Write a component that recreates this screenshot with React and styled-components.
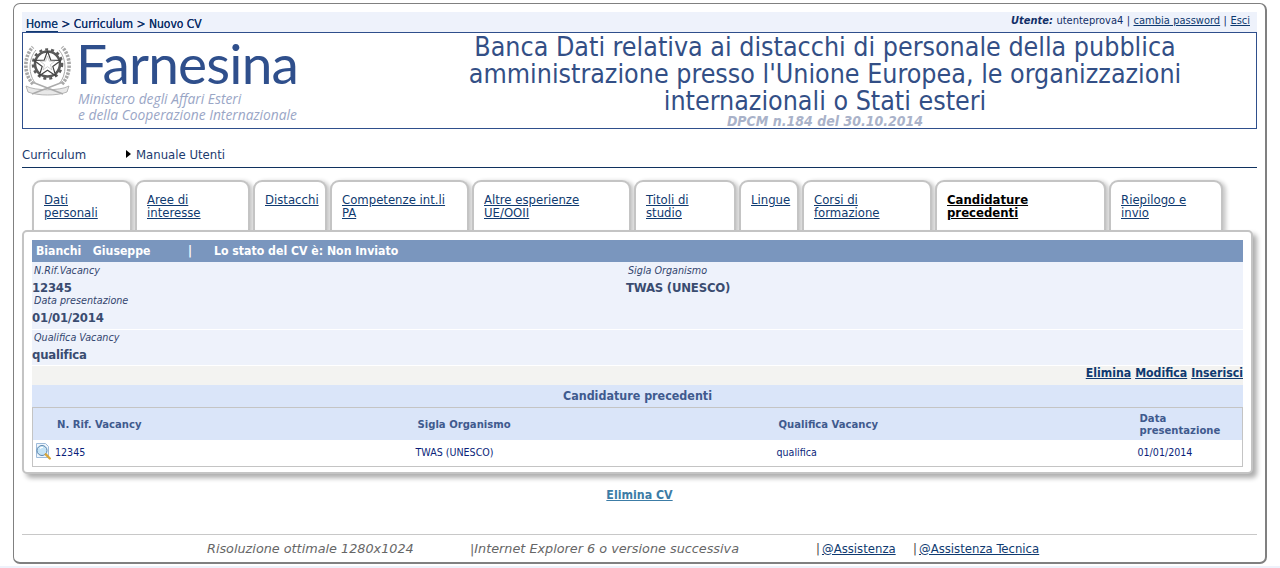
import React from "react";
import styled, { createGlobalStyle } from "styled-components";

const Global = createGlobalStyle`
  html, body { margin: 0; padding: 0; background: #fff; }
  body { font-family: "DejaVu Sans Condensed", "DejaVu Sans", sans-serif; font-stretch: condensed; color: #1c3a6e; }
  a { color: #0f3a70; text-decoration: underline; }
`;

const Frame = styled.div`
  box-sizing: border-box;
  width: 1254px;
  height: 561px;
  margin: 3px 0 0 13px;
  padding: 8px 8px 0 8px;
  background: #fff;
  border: 1px solid #808080;
  border-width: 1px 2px 2px 1px;
  border-radius: 7px;
  overflow: hidden;
`;

const BottomStrip = styled.div`
  height: 2px;
  margin-top: 2px;
  background: #eef2fb;
`;

const TopBar = styled.div`
  display: flex;
  justify-content: space-between;
  align-items: center;
  height: 20px;
  padding: 0 7px 0 4px;
  background: #eef2fb;
`;

const Crumbs = styled.div`
  font-size: 12px;
  padding-top: 3px;
  color: #0f2f66;
  text-shadow: 0 0 0.4px #0f2f66;
  a { color: #123a70; text-decoration: none; border-bottom: 1px solid #123a70; }
`;

const UserInfo = styled.div`
  font-size: 11px;
  padding-bottom: 3px;
  color: #122f68;
  word-spacing: 0.3px;
  em { font-style: italic; font-weight: 700; }
`;

const Header = styled.div`
  box-sizing: border-box;
  height: 97px;
  display: flex;
  border: 1px solid #2f4f8c;
`;

const Logo = styled.div`
  flex: none;
  width: 442px;
  display: flex;
  padding: 10px 0 0 1px;
  box-sizing: border-box;
`;

const LogoText = styled.div`
  margin: -6px 0 0 5px;
  font-family: "Lato", sans-serif;
  font-stretch: normal;
`;

const Brand = styled.div`
  font-size: 55px;
  line-height: 52px;
  letter-spacing: -0.8px;
  color: #2f4f8c;
`;

const Ministry = styled.div`
  font-family: "Open Sans", sans-serif;
  font-size: 13.8px;
  line-height: 16px;
  font-style: italic;
  color: #9aa6c6;
  margin: 2px 0 0 2px;
`;

const TitleBox = styled.div`
  flex: 1;
  text-align: center;
  padding: 0 71px 0 0;
`;

const Title = styled.div`
  font-size: 26.6px;
  line-height: 27px;
  color: #334f86;
`;

const Subtitle = styled.div`
  font-size: 14px;
  line-height: 14px;
  font-weight: 700;
  font-style: italic;
  color: #a9b2c9;
`;

const SubNav = styled.div`
  display: flex;
  align-items: center;
  height: 18px;
  margin-top: 16px;
  padding-bottom: 4px;
  font-size: 13px;
  border-bottom: 1px solid #10325f;
`;

const SubItem = styled.span`
  width: 104px;
`;

const Arrow = styled.span`
  width: 0;
  height: 0;
  margin-right: 5px;
  border-left: 5px solid #000;
  border-top: 4px solid transparent;
  border-bottom: 4px solid transparent;
`;

const Tabs = styled.div`
  display: flex;
  gap: 3px;
  margin: 12px 0 -2px 10px;
  position: relative;
`;

const Tab = styled.div`
  box-sizing: border-box;
  width: ${p => p.$w}px;
  height: 52px;
  padding: 11px 8px 0 10px;
  font-size: 13px;
  line-height: 13px;
  background: #fff;
  border: 2px solid #c4c4c4;
  border-bottom: 0;
  border-radius: 9px 9px 0 0;
  box-shadow: 3px 1px 4px rgba(0, 0, 0, 0.22);
  a { font-weight: ${p => (p.$active ? 700 : 400)}; color: ${p => (p.$active ? "#000" : "#0f3a70")}; }
`;

const Panel = styled.div`
  position: relative;
  box-sizing: border-box;
  width: 1231px;
  height: 244px;
  padding: 8px 8px 0 8px;
  background: #fff;
  border: 2px solid #c4c4c4;
  border-radius: 5px;
  box-shadow: 4px 4px 5px rgba(0, 0, 0, 0.32);
`;

const StatusBar = styled.div`
  display: flex;
  height: 22px;
  align-items: center;
  padding-left: 4px;
  background: #7a96be;
  color: #fff;
  font-size: 12.2px;
  font-weight: 700;
`;

const StatusName = styled.span`
  width: 152px;
  white-space: pre;
`;

const StatusSep = styled.span`
  width: 26px;
`;

const InfoBlock = styled.div`
  box-sizing: border-box;
  display: grid;
  grid-template-columns: ${p => p.$cols || "1fr"};
  background: #eef2fb;
  height: ${p => p.$h}px;
  padding-top: ${p => p.$top || 0}px;
  margin-bottom: 1px;
`;

const Field = styled.div``;

const FieldLabel = styled.div`
  font-size: 10.7px;
  line-height: 14px;
  font-style: italic;
  color: #33456e;
  padding-left: 2px;
`;

const FieldValue = styled.div`
  font-size: 13px;
  line-height: 19px;
  margin-bottom: -3px;
  letter-spacing: -0.2px;
  font-weight: 700;
  color: #3a4c70;
`;

const Actions = styled.div`
  display: flex;
  justify-content: flex-end;
  gap: 4px;
  height: 19px;
  background: #f3f3f1;
  font-size: 12.2px;
  font-weight: 700;
  line-height: 15px;
`;

const SectionTitle = styled.div`
  height: 22px;
  line-height: 22px;
  text-align: center;
  font-size: 12.4px;
  font-weight: 700;
  color: #3f5a8e;
  background: #dae5f9;
`;

const Table = styled.table`
  box-sizing: border-box;
  width: 100%;
  height: 59px;
  table-layout: fixed;
  border-collapse: collapse;
  border: 1px solid #c4c4c4;
`;

const Head = styled.th`
  height: 31px;
  padding: 1px 0 0 ${p => p.$pad || 4}px;
  text-align: left;
  background: #dae5f9;
  color: #3f5a8e;
  font-size: 11.2px;
  line-height: 12px;
  font-weight: 700;
`;

const Cell = styled.td`
  height: 23px;
  padding: 0 0 3px 2px;
  font-size: 10.6px;
  color: #0b1f7a;
`;

const IconCell = styled.span`
  display: flex;
  align-items: center;
  gap: 4px;
`;

const Center = styled.div`
  text-align: center;
  margin-top: 14px;
  height: 46px;
  font-size: 12.3px;
  font-weight: 700;
  a { color: #3c7ca6; }
`;

const Footer = styled.div`
  display: flex;
  height: 27px;
  align-items: center;
  border-top: 1px solid #c8c8c8;
  font-size: 13px;
`;

const FootNote = styled.span`
  width: ${p => p.$w}px;
  margin-left: ${p => p.$ml || 0}px;
  font-family: "DejaVu Sans", sans-serif;
  font-stretch: normal;
  font-style: italic;
  font-size: 12.8px;
  color: #666;
  white-space: nowrap;
`;

const FootLink = styled.span`
  width: ${p => p.$w}px;
  white-space: nowrap;
  color: #444;
  a { margin-left: 2px; }
`;

const Emblem = () => (
  <svg width="47" height="55" viewBox="0 0 47 55" style={{ flex: "none" }}>
    <g fill="none" stroke="#a8a8a8">
      <path d="M9 41C0 32-1 14 9 4" strokeWidth="3.6" strokeDasharray="2.4 1.2" />
      <path d="M38 41C47 32 48 14 38 4" strokeWidth="3.6" strokeDasharray="2.4 1.2" />
      <path d="M12 41C4 32 4 16 12 7" strokeWidth="1" />
      <path d="M35 41C43 32 43 16 35 7" strokeWidth="1" />
    </g>
    <circle cx="23.5" cy="21" r="12.5" fill="#fff" stroke="#5a5a5a" strokeWidth="2.6" />
    <circle cx="23.5" cy="21" r="14.6" fill="none" stroke="#5a5a5a" strokeWidth="2.4" strokeDasharray="3 3" />
    <path
      d="M23.5 8l3.3 9.2 10 .2-8 6 2.9 9.4-8.2-5.6-8.2 5.6 2.9-9.4-8-6 10-.2z"
      fill="#fff"
      stroke="#444"
      strokeWidth="1.2"
      strokeLinejoin="round"
    />
    <path d="M23.5 13l1.8 5.2 5.5.1-4.4 3.3 1.6 5.3-4.5-3.2-4.5 3.2 1.6-5.3-4.4-3.3 5.5-.1z" fill="#fff" stroke="#b0b0b0" strokeWidth=".6" />
    <path d="M2 43c9 5 34 5 43 0l-2 6c-10 4-29 4-39 0z" fill="#e8e8e8" stroke="#a5a5a5" strokeWidth=".8" />
    <path d="M8 39l31 12M39 39L8 51" stroke="#ababab" strokeWidth="1.4" />
  </svg>
);

const PageIcon = () => (
  <svg width="16" height="17" viewBox="0 0 16 17">
    <path d="M1.5 .5h9l3 3v11h-12z" fill="#eef5fc" stroke="#9dbbda" />
    <circle cx="7" cy="7.5" r="5" fill="#c4e3f6" stroke="#5c86ad" />
    <path d="M5 5.5a3 3 0 0 1 3-1" fill="none" stroke="#fff" strokeWidth="1.2" />
    <path d="M10.8 11.3l4 4.2" stroke="#d9a63a" strokeWidth="2.4" strokeLinecap="round" />
  </svg>
);

const tabs = [
  { w: 100, lines: ["Dati", "personali"] },
  { w: 115, lines: ["Aree di", "interesse"] },
  { w: 74, lines: ["Distacchi"] },
  { w: 139, lines: ["Competenze int.li", "PA"] },
  { w: 159, lines: ["Altre esperienze", "UE/OOII"] },
  { w: 102, lines: ["Titoli di", "studio"] },
  { w: 60, lines: ["Lingue"] },
  { w: 130, lines: ["Corsi di", "formazione"] },
  { w: 171, lines: ["Candidature", "precedenti"], active: true },
  { w: 114, lines: ["Riepilogo e", "invio"] },
];

export default function App() {
  return (
    <>
      <Global />
      <Frame>
        <TopBar>
          <Crumbs>
            <a href="#home">Home</a> &gt; Curriculum &gt; Nuovo CV
          </Crumbs>
          <UserInfo>
            <em>Utente:</em> utenteprova4 | <a href="#pw">cambia password</a> | <a href="#esci">Esci</a>
          </UserInfo>
        </TopBar>
        <Header>
          <Logo>
            <Emblem />
            <LogoText>
              <Brand>Farnesina</Brand>
              <Ministry>
                Ministero degli Affari Esteri
                <br />e della Cooperazione Internazionale
              </Ministry>
            </LogoText>
          </Logo>
          <TitleBox>
            <Title>
              Banca Dati relativa ai distacchi di personale della pubblica amministrazione presso l'Unione Europea, le
              organizzazioni internazionali o Stati esteri
            </Title>
            <Subtitle>DPCM n.184 del 30.10.2014</Subtitle>
          </TitleBox>
        </Header>
        <SubNav>
          <SubItem>Curriculum</SubItem>
          <Arrow />
          <span>Manuale Utenti</span>
        </SubNav>
        <Tabs>
          {tabs.map(t => (
            <Tab key={t.lines[0]} $w={t.w} $active={t.active}>
              <a href="#tab">
                {t.lines[0]}
                {t.lines[1] && <br />}
                {t.lines[1]}
              </a>
            </Tab>
          ))}
        </Tabs>
        <Panel>
          <StatusBar>
            <StatusName>Bianchi   Giuseppe</StatusName>
            <StatusSep>|</StatusSep>
            <span>Lo stato del CV è: Non Inviato</span>
          </StatusBar>
          <InfoBlock $cols="594px 1fr" $h={67} $top={2}>
            <Field>
              <FieldLabel>N.Rif.Vacancy</FieldLabel>
              <FieldValue>12345</FieldValue>
              <FieldLabel>Data presentazione</FieldLabel>
              <FieldValue>01/01/2014</FieldValue>
            </Field>
            <Field>
              <FieldLabel>Sigla Organismo</FieldLabel>
              <FieldValue>TWAS (UNESCO)</FieldValue>
            </Field>
          </InfoBlock>
          <InfoBlock $h={35} $top={1}>
            <Field>
              <FieldLabel>Qualifica Vacancy</FieldLabel>
              <FieldValue>qualifica</FieldValue>
            </Field>
          </InfoBlock>
          <Actions>
            <a href="#e">Elimina</a>
            <a href="#m">Modifica</a>
            <a href="#i">Inserisci</a>
          </Actions>
          <SectionTitle>Candidature precedenti</SectionTitle>
          <Table>
            <colgroup>
              <col style={{ width: 381 }} />
              <col style={{ width: 361 }} />
              <col style={{ width: 361 }} />
              <col />
            </colgroup>
            <thead>
              <tr>
                <Head $pad={24}>N. Rif. Vacancy</Head>
                <Head>Sigla Organismo</Head>
                <Head>Qualifica Vacancy</Head>
                <Head>
                  Data
                  <br />
                  presentazione
                </Head>
              </tr>
            </thead>
            <tbody>
              <tr>
                <Cell>
                  <IconCell>
                    <PageIcon />
                    12345
                  </IconCell>
                </Cell>
                <Cell>TWAS (UNESCO)</Cell>
                <Cell>qualifica</Cell>
                <Cell>01/01/2014</Cell>
              </tr>
            </tbody>
          </Table>
        </Panel>
        <Center>
          <a href="#el">Elimina CV</a>
        </Center>
        <Footer>
          <FootNote $w={263} $ml={185}>
            Risoluzione ottimale 1280x1024
          </FootNote>
          <FootNote $w={346}>|Internet Explorer 6 o versione successiva</FootNote>
          <FootLink $w={97}>
            |<a href="#a">@Assistenza</a>
          </FootLink>
          <FootLink>
            |<a href="#t">@Assistenza Tecnica</a>
          </FootLink>
        </Footer>
      </Frame>
      <BottomStrip />
    </>
  );
}
